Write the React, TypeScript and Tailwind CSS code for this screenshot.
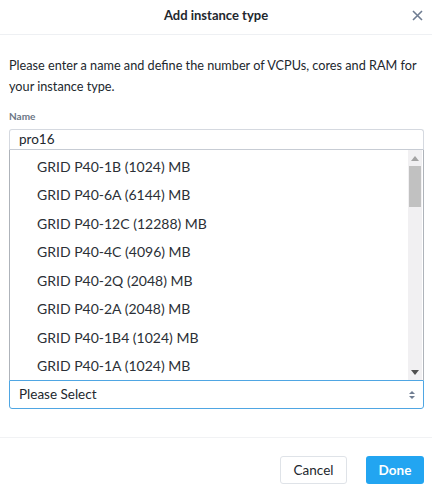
import React from "react";

const items = [
  "GRID P40-1B (1024) MB",
  "GRID P40-6A (6144) MB",
  "GRID P40-12C (12288) MB",
  "GRID P40-4C (4096) MB",
  "GRID P40-2Q (2048) MB",
  "GRID P40-2A (2048) MB",
  "GRID P40-1B4 (1024) MB",
  "GRID P40-1A (1024) MB",
];

export default function App() {
  return (
    <div
      className="w-[432px] h-[490px] bg-white flex flex-col text-[#22272e] overflow-hidden"
      style={{ fontFamily: "Lato, 'Open Sans', sans-serif" }}
    >
      {/* header */}
      <div className="h-[35px] border-b border-[#eef0f3] flex items-center justify-center relative shrink-0">
        <span className="text-[13px] font-bold text-[#22272e] mt-[-3px]">Add instance type</span>
        <svg
          className="absolute right-[9px] top-[10px]"
          width="11"
          height="11"
          viewBox="0 0 11 11"
        >
          <path d="M1 1L10 10M10 1L1 10" stroke="#6f7d92" strokeWidth="1.6" />
        </svg>
      </div>

      {/* body */}
      <div className="px-[9px] pt-[20px] flex flex-col flex-1">
        <p className="text-[12.7px] leading-[21px] text-[#22272e] whitespace-nowrap">
          Please enter a name and define the number of VCPUs, cores and RAM for
          <br />
          your instance type.
        </p>
        <div className="mt-[12px] text-[10px] font-bold text-[#6b7685] leading-[14px]">Name</div>
        <div className="mt-[6px] w-[415px] flex flex-col">
          <div className="h-[21px] border border-[#d5d9e0] border-b-[#c7ccd4] rounded-t-[3px] px-[9px] flex items-center text-[13.5px]">
            pro16
          </div>
          <div className="h-[230px] border-x border-[#aeb3ba] bg-white flex">
            <div className="flex-1 flex flex-col pt-[2px]">
              {items.map((it) => (
                <div key={it} className="h-[28.8px] flex items-center pl-[27px] text-[14px] text-[#2b2f36]">
                  {it}
                </div>
              ))}
            </div>
            <div className="w-[14px] bg-[#f1f0f2] flex flex-col items-center mr-[1px]">
              <svg className="mt-[6px]" width="8" height="5" viewBox="0 0 8 5">
                <path d="M0 5L4 0L8 5Z" fill="#a3a3a3" />
              </svg>
              <div className="mt-[5px] w-[12px] h-[41px] bg-[#c1c1c1]" />
              <div className="flex-1" />
              <svg className="mb-[5px]" width="8" height="5" viewBox="0 0 8 5">
                <path d="M0 0L8 0L4 5Z" fill="#505050" />
              </svg>
            </div>
          </div>
          <div className="h-[29px] border border-[#4fa6e3] rounded-b-[3px] flex items-center px-[9px] text-[13.5px] text-[#22272e]">
            <span className="flex-1">Please Select</span>
            <svg width="6" height="10" viewBox="0 0 6 10" className="mr-[-1px]">
              <path d="M0 4L3 1L6 4Z" fill="#6f7d92" />
              <path d="M0 6L3 9L6 6Z" fill="#6f7d92" />
            </svg>
          </div>
        </div>
      </div>

      {/* footer */}
      <div className="h-[53px] border-t border-[#f1f2f4] flex items-start justify-end gap-[19px] pr-[8px] pt-[18px] shrink-0">
        <button className="h-[28px] w-[67px] border border-[#dfe3e8] rounded-[3px] bg-white text-[13.5px] text-[#22272e]">
          Cancel
        </button>
        <button className="h-[28px] w-[58px] rounded-[3px] bg-[#22a5f1] text-white text-[13.5px] font-bold">
          Done
        </button>
      </div>
    </div>
  );
}
